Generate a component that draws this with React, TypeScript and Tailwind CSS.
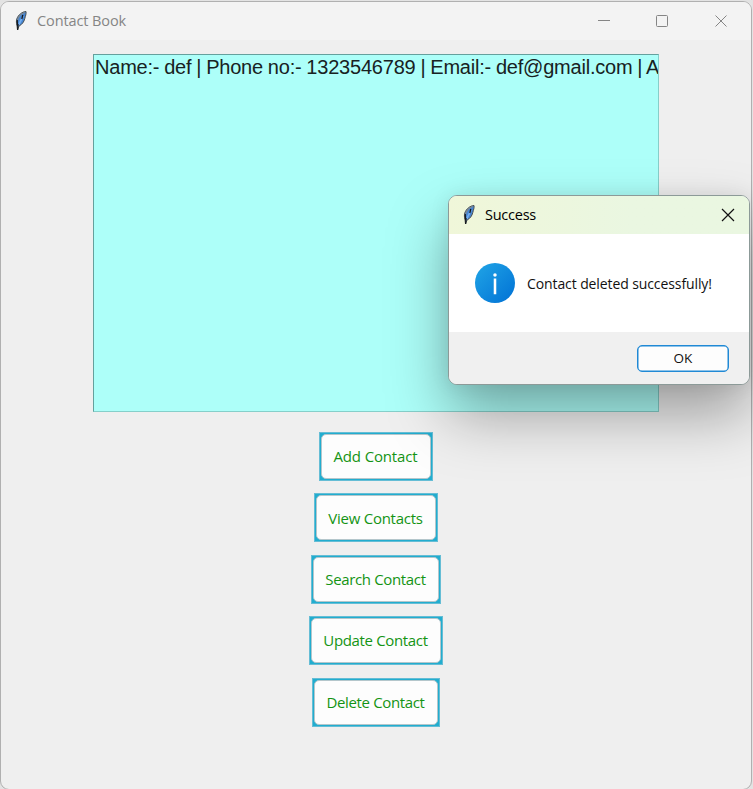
import React from "react";

function Feather() {
  return (
    <svg width="14" height="22" viewBox="0 0 14 22" className="block shrink-0">
      <path d="M12 1.500 C8.500 1.500 4 5 2.800 9 C2.200 11 2.300 13 3 15.500 L3.500 20 L5 16 C8 14.500 10 12 10.800 8.500 C11.300 6 12.500 4 12 1.500Z" fill="#4786d2" stroke="#4a4f50" strokeWidth="1" />
      <path d="M10.800 2.500 C7 3.500 4.500 6.500 3.600 10" fill="none" stroke="#83888a" strokeWidth="1.100" />
      <path d="M9 6 C8 9 6 11 5 15" fill="none" stroke="#74aef0" strokeWidth="1.600" />
      <path d="M8.800 5 L7.800 9 M3.200 10 L3.500 16 M4 14 L3.600 20" fill="none" stroke="#15191d" strokeWidth="1.300" />
    </svg>
  );
}

const actions = [
  { label: "Add Contact", size: "w-[114px]", text: "tracking-[-0.15px]" },
  { label: "View Contacts", size: "w-[124px]", text: "tracking-[-0.25px]" },
  { label: "Search Contact", size: "w-[130px]", text: "tracking-[-0.35px]" },
  { label: "Update Contact", size: "w-[134px]", text: "tracking-[-0.35px]" },
  { label: "Delete Contact", size: "w-[128px]", text: "tracking-[-0.35px]" },
];

export default function App() {
  return (
    <div className="relative h-[789px] w-[753px] overflow-hidden bg-[#e3e3e3] pt-px font-['Open_Sans',sans-serif]">
      <main className="flex h-[789px] w-[752px] flex-col overflow-hidden rounded-[9px] border border-[#b0b0b0] bg-[#efefef]">
        <header className="flex h-[38px] shrink-0 items-center bg-[#f3f3f3] pl-[13px] text-[#858585]">
          <Feather />
          <h1 className="ml-[9px] text-[14.5px] leading-5 tracking-[-0.1px]">Contact Book</h1>
          <svg className="ml-auto mr-[17px]" width="138" height="20" viewBox="0 0 138 20" fill="none" stroke="#858585">
            <path d="M2 9.500h12M119.500 4.500l11 11m0-11-11 11" />
            <rect x="60.500" y="4.500" width="11" height="11" rx="1" />
          </svg>
        </header>
        <section className="ml-[92px] mt-[14px] h-[358px] w-[566px] shrink-0 overflow-hidden border border-[#86cfca] border-l-[#65a09d] border-t-[#65a09d] bg-[#adfff9]">
          <p className="whitespace-nowrap pl-px font-['Liberation_Sans',sans-serif] text-[20px] leading-[25px] tracking-[-0.21px] [word-spacing:-0.45px] text-[#182222]">
            Name:- def | Phone no:- 1323546789 | Email:- def@gmail.com | A
          </p>
        </section>
        <nav className="mt-[20px] flex w-[749px] flex-col items-center gap-[12.4px]">
          {actions.map((action) => (
            <button key={action.label} className={`${action.size} flex h-[49px] shrink-0 border border-[#65bdd5] bg-[#22adcf] p-px`}>
              <span className={`${action.text} flex h-full w-full items-center justify-center whitespace-nowrap rounded-[5px] border border-[#b4c6cb] bg-[#fdfdfd] text-[15px] text-[#149414]`}>
                {action.label}
              </span>
            </button>
          ))}
        </nav>
      </main>
      <section role="dialog" className="absolute left-[448px] top-[195px] flex h-[190px] w-[302px] flex-col overflow-hidden rounded-[9px] border border-[#8c9a98] bg-white shadow-[0_30px_60px_rgba(0,0,0,0.34),0_0_20px_rgba(0,0,0,0.08)]">
        <header className="flex h-[38px] shrink-0 items-center bg-gradient-to-r from-[#f0f7d9] to-[#eaf7e1] to-60% pl-[13px] text-black">
          <Feather />
          <h2 className="ml-[9px] text-[14.5px] leading-5 tracking-[-0.25px]">Success</h2>
          <svg className="ml-auto mr-[14px]" width="14" height="14" viewBox="0 0 14 14" stroke="#111" strokeWidth="1.2">
            <path d="m1 1 12 12M13 1 1 13" />
          </svg>
        </header>
        <div className="flex h-[98px] shrink-0 items-center pl-[26px]">
          <svg width="40" height="40" viewBox="0 0 41 41">
            <defs>
              <linearGradient id="info" x1="0" y1="0" x2="1" y2="1">
                <stop stopColor="#21a5e6" />
                <stop offset="1" stopColor="#0071d5" />
              </linearGradient>
            </defs>
            <circle cx="20.500" cy="20.500" r="20.500" fill="url(#info)" />
            <circle cx="20.500" cy="12.300" r="1.800" fill="#fff" />
            <path d="M20.500 16v16" stroke="#fff" strokeWidth="2.600" />
          </svg>
          <p className="ml-[12px] mt-[2px] text-[14px] leading-5 tracking-[-0.1px] text-[#111]">Contact deleted successfully!</p>
        </div>
        <footer className="flex flex-1 items-center justify-end bg-[#f0f0f0] pr-[20px] pt-px">
          <button className="h-[27px] w-[92px] rounded-[5px] border border-[#2089d5] bg-[#fdfdfd] pt-px text-[13.5px] leading-none text-[#111] shadow-[inset_0_0_0_0.5px_#2089d5]">OK</button>
        </footer>
      </section>
    </div>
  );
}
